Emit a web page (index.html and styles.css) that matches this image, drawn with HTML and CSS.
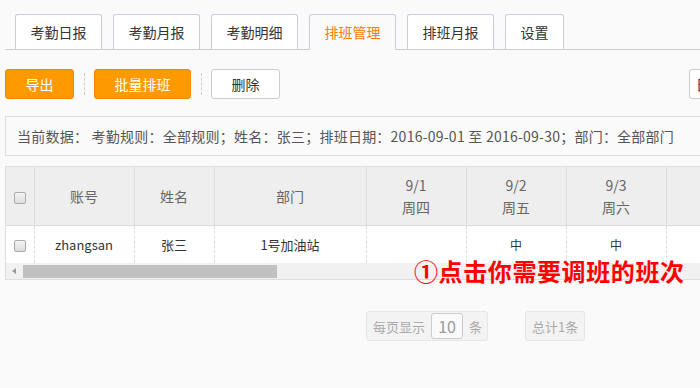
FILE: index.html
```html
<!DOCTYPE html>
<html lang="zh-CN">
<head>
    <meta charset="UTF-8">
    <title>排班管理</title>
    <link rel="stylesheet" href="styles.css">
</head>
<body>
    <div class="page">
        <ul class="tabs">
            <li class="tab">考勤日报</li>
            <li class="tab">考勤月报</li>
            <li class="tab">考勤明细</li>
            <li class="tab active">排班管理</li>
            <li class="tab">排班月报</li>
            <li class="tab">设置</li>
        </ul>

        <div class="toolbar">
            <button class="btn btn-orange btn-sm">导出</button>
            <span class="sep"></span>
            <button class="btn btn-orange btn-lg">批量排班</button>
            <span class="sep"></span>
            <button class="btn btn-white btn-sm">删除</button>
            <button class="btn btn-white btn-edge">日</button>
        </div>

        <div class="info">当前数据： 考勤规则：全部规则；姓名：张三；排班日期：2016-09-01 至 2016-09-30；部门：全部部门</div>

        <div class="grid-wrap">
            <div class="grid-clip">
                <table class="grid">
                    <colgroup>
                        <col style="width:28px">
                        <col style="width:100px">
                        <col style="width:80px">
                        <col style="width:152px">
                        <col style="width:100px">
                        <col style="width:100px">
                        <col style="width:100px">
                        <col style="width:100px">
                    </colgroup>
                    <thead>
                        <tr>
                            <th><span class="chk"></span></th>
                            <th>账号</th>
                            <th>姓名</th>
                            <th>部门</th>
                            <th>9/1<br>周四</th>
                            <th>9/2<br>周五</th>
                            <th>9/3<br>周六</th>
                            <th></th>
                        </tr>
                    </thead>
                    <tbody>
                        <tr>
                            <td><span class="chk"></span></td>
                            <td>zhangsan</td>
                            <td>张三</td>
                            <td>1号加油站</td>
                            <td></td>
                            <td class="shift">中</td>
                            <td class="shift">中</td>
                            <td></td>
                        </tr>
                    </tbody>
                </table>
            </div>
            <div class="hscroll">
                <span class="arrow"></span>
                <span class="thumb"></span>
            </div>
            <div class="tip">①点击你需要调班的班次</div>
        </div>

        <div class="pager">
            <div class="pbox">每页显示 <span class="size">10</span> 条</div>
            <div class="pbox">总计1条</div>
        </div>
    </div>
</body>
</html>
```

FILE: styles.css
```css
body {
    margin: 0;
    background: #fafafa;
    font-family: "Noto Sans CJK SC", "Open Sans", sans-serif;
    font-size: 14px;
    color: #333;
    overflow: hidden;
}

.page {
    padding: 14px 0 0 5px;
}

.tabs {
    list-style: none;
    margin: 0;
    padding: 0 0 0 10px;
    display: flex;
    gap: 11px;
    border-bottom: 1px solid #ccc;
    height: 35px;
}

.tab {
    height: 34px;
    line-height: 34px;
    padding: 0 14.5px;
    border: 1px solid #ccd;
    border-bottom: none;
    border-radius: 3px 3px 0 0;
    background: #fff;
    color: #333;
    font-size: 14px;
}

.tab.active {
    height: 35px;
    background: #fafafa;
    color: #ff7a00;
}

.toolbar {
    display: flex;
    align-items: center;
    margin-top: 19px;
    height: 30px;
}

.btn {
    height: 30px;
    border-radius: 3px;
    font-family: inherit;
    font-size: 14px;
    padding: 0;
    cursor: pointer;
}

.btn-orange {
    background: #ff9900;
    border: 1px solid #e98a00;
    color: #fff;
}

.btn-white {
    background: #fff;
    border: 1px solid #ccc;
    color: #333;
}

.btn-sm {
    width: 69px;
}

.btn-lg {
    width: 97px;
}

.btn-edge {
    width: 40px;
    margin-left: auto;
    margin-right: -29px;
    color: #3a2a55;
    text-align: left;
    padding-left: 6px;
}

.sep {
    width: 0;
    height: 22px;
    border-left: 1px dashed #ccc;
    margin: 0 9px 0 10px;
}

.info {
    margin-top: 17px;
    height: 38px;
    line-height: 38px;
    border: 1px solid #ddd;
    border-right: none;
    background: #fafafa;
    padding-left: 11px;
    color: #555;
    font-size: 14px;
    letter-spacing: 0.24px;
    white-space: nowrap;
}

.grid-wrap {
    position: relative;
    margin-top: 10px;
    border-top: 1px solid #ddd;
    border-left: 1px solid #ddd;
    border-bottom: 1px solid #ddd;
}

.grid-clip {
    overflow: hidden;
}

.grid {
    border-collapse: collapse;
    table-layout: fixed;
    width: 760px;
}

.grid th {
    height: 58px;
    background: #eee;
    color: #666;
    font-weight: normal;
    font-size: 14px;
    line-height: 22px;
    border-right: 1px solid #ddd;
    border-bottom: 1px solid #ddd;
    padding: 0;
}

.grid td {
    height: 37px;
    background: #fff;
    text-align: center;
    font-size: 13px;
    color: #333;
    border-right: 1px dashed #ddd;
    padding: 0;
}

.grid td.shift {
    font-size: 12px;
}

.chk {
    display: inline-block;
    width: 10px;
    height: 10px;
    border: 1px solid #aaa;
    border-radius: 2px;
    background: linear-gradient(#f4f4f4, #ddd);
    vertical-align: middle;
}

.hscroll {
    position: relative;
    height: 16px;
    background: #f1f1f1;
    display: flex;
    align-items: center;
}

.arrow {
    width: 0;
    height: 0;
    border-top: 3px solid transparent;
    border-bottom: 3px solid transparent;
    border-right: 4px solid #999;
    margin-left: 6px;
}

.thumb {
    height: 13px;
    width: 254px;
    margin-left: 7px;
    background: #c1c1c1;
}

.tip {
    position: absolute;
    left: 408px;
    top: 89px;
    color: #ff0000;
    font-size: 24px;
    font-weight: bold;
    font-family: "Noto Sans CJK SC", sans-serif;
    line-height: 30px;
    letter-spacing: 0.6px;
    white-space: nowrap;
}

.pager {
    display: flex;
    gap: 37px;
    margin-top: 31px;
    padding-left: 361px;
}

.pbox {
    height: 28px;
    padding: 0 5px 0 6px;
    border: 1px solid #e6e6e6;
    border-radius: 3px;
    background: #f3f3f3;
    color: #aaa;
    font-size: 13px;
    display: flex;
    align-items: center;
    gap: 6px;
}

.pbox + .pbox {
    padding: 0 6px;
}

.size {
    display: inline-block;
    width: 30px;
    height: 24px;
    line-height: 24px;
    text-align: center;
    border: 1px solid #ccc;
    border-radius: 3px;
    background: #fafafa;
    color: #999;
    font-size: 16px;
}
```
